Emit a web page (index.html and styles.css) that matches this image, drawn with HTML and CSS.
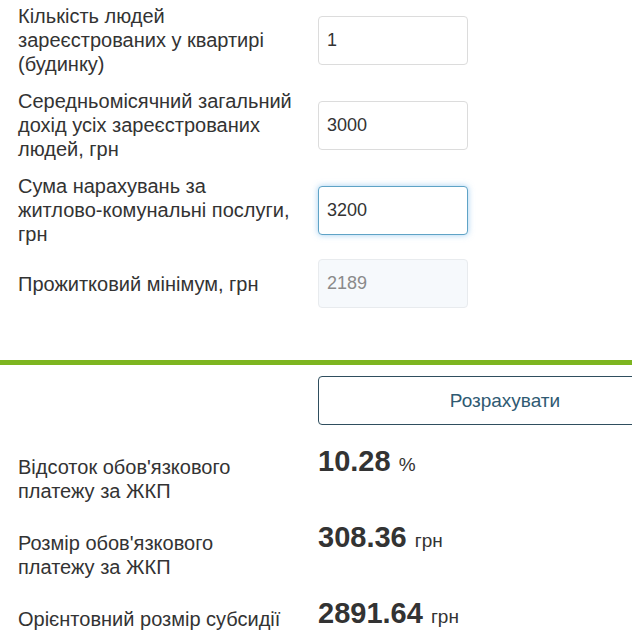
FILE: index.html
```html
<!DOCTYPE html>
<html lang="uk">
<head>
    <meta charset="UTF-8">
    <meta name="viewport" content="width=device-width, initial-scale=1.0">
    <title>Калькулятор субсидії</title>
    <link rel="stylesheet" href="styles.css">
</head>
<body>
    <div class="form">
        <div class="row">
            <label class="label" for="people">Кількість людей зареєстрованих у квартирі (будинку)</label>
            <input class="field" type="text" id="people" value="1">
        </div>
        <div class="row">
            <label class="label" for="income">Середньомісячний загальний дохід усіх зареєстрованих людей, грн</label>
            <input class="field" type="text" id="income" value="3000">
        </div>
        <div class="row">
            <label class="label" for="charges">Сума нарахувань за житлово-комунальні послуги, грн</label>
            <input class="field focused" type="text" id="charges" value="3200">
        </div>
        <div class="row">
            <label class="label" for="minimum">Прожитковий мінімум, грн</label>
            <input class="field" type="text" id="minimum" value="2189" disabled>
        </div>
    </div>

    <div class="divider"></div>

    <div class="actions">
        <button class="calc-btn">Розрахувати</button>
    </div>

    <div class="results">
        <div class="result">
            <div class="label">Відсоток обов'язкового платежу за ЖКП</div>
            <div class="value">10.28 <span class="unit">%</span></div>
        </div>
        <div class="result">
            <div class="label">Розмір обов'язкового платежу за ЖКП</div>
            <div class="value">308.36 <span class="unit">грн</span></div>
        </div>
        <div class="result">
            <div class="label">Орієнтовний розмір субсидії</div>
            <div class="value">2891.64 <span class="unit">грн</span></div>
        </div>
    </div>
</body>
</html>
```

FILE: styles.css
```css
body {
    margin: 0;
    font-family: "Liberation Sans", Arial, sans-serif;
    color: #333;
    background-color: #fff;
    overflow-x: hidden;
}
.form {
    padding: 4px 0 0 18px;
    display: flex;
    flex-direction: column;
    gap: 13px;
}
.row {
    display: flex;
    align-items: center;
    gap: 24px;
}
.label {
    width: 276px;
    flex-shrink: 0;
    font-size: 20px;
    line-height: 24px;
    color: #333;
}
.field {
    box-sizing: border-box;
    width: 150px;
    height: 49px;
    padding: 0 8px;
    border: 1px solid #dcdcdc;
    border-radius: 4px;
    font-family: inherit;
    font-size: 18px;
    color: #333;
    background-color: #fff;
    outline: none;
}
.field.focused {
    border-color: #5fa3c6;
    box-shadow: 0 0 6px rgba(102, 175, 233, 0.6);
}
.field:disabled {
    background-color: #f6f9fc;
    border-color: #e8ebee;
    color: #8a8a8a;
}
.divider {
    height: 5px;
    margin-top: 52px;
    background-color: #7db520;
}
.actions {
    padding: 11px 0 0 318px;
    overflow: hidden;
}
.calc-btn {
    display: block;
    width: 374px;
    height: 49px;
    border: 1px solid #2f4e5e;
    border-radius: 4px;
    background-color: #fff;
    color: #2f5a72;
    font-family: inherit;
    font-size: 19px;
    cursor: pointer;
}
.results {
    padding: 30px 0 0 18px;
    display: flex;
    flex-direction: column;
    gap: 28px;
}
.result {
    display: flex;
    align-items: flex-start;
    gap: 24px;
}
.value {
    margin-top: -6px;
    font-size: 29px;
    line-height: 24px;
    font-weight: bold;
    color: #333;
}
.unit {
    font-size: 19px;
    font-weight: normal;
}
```
